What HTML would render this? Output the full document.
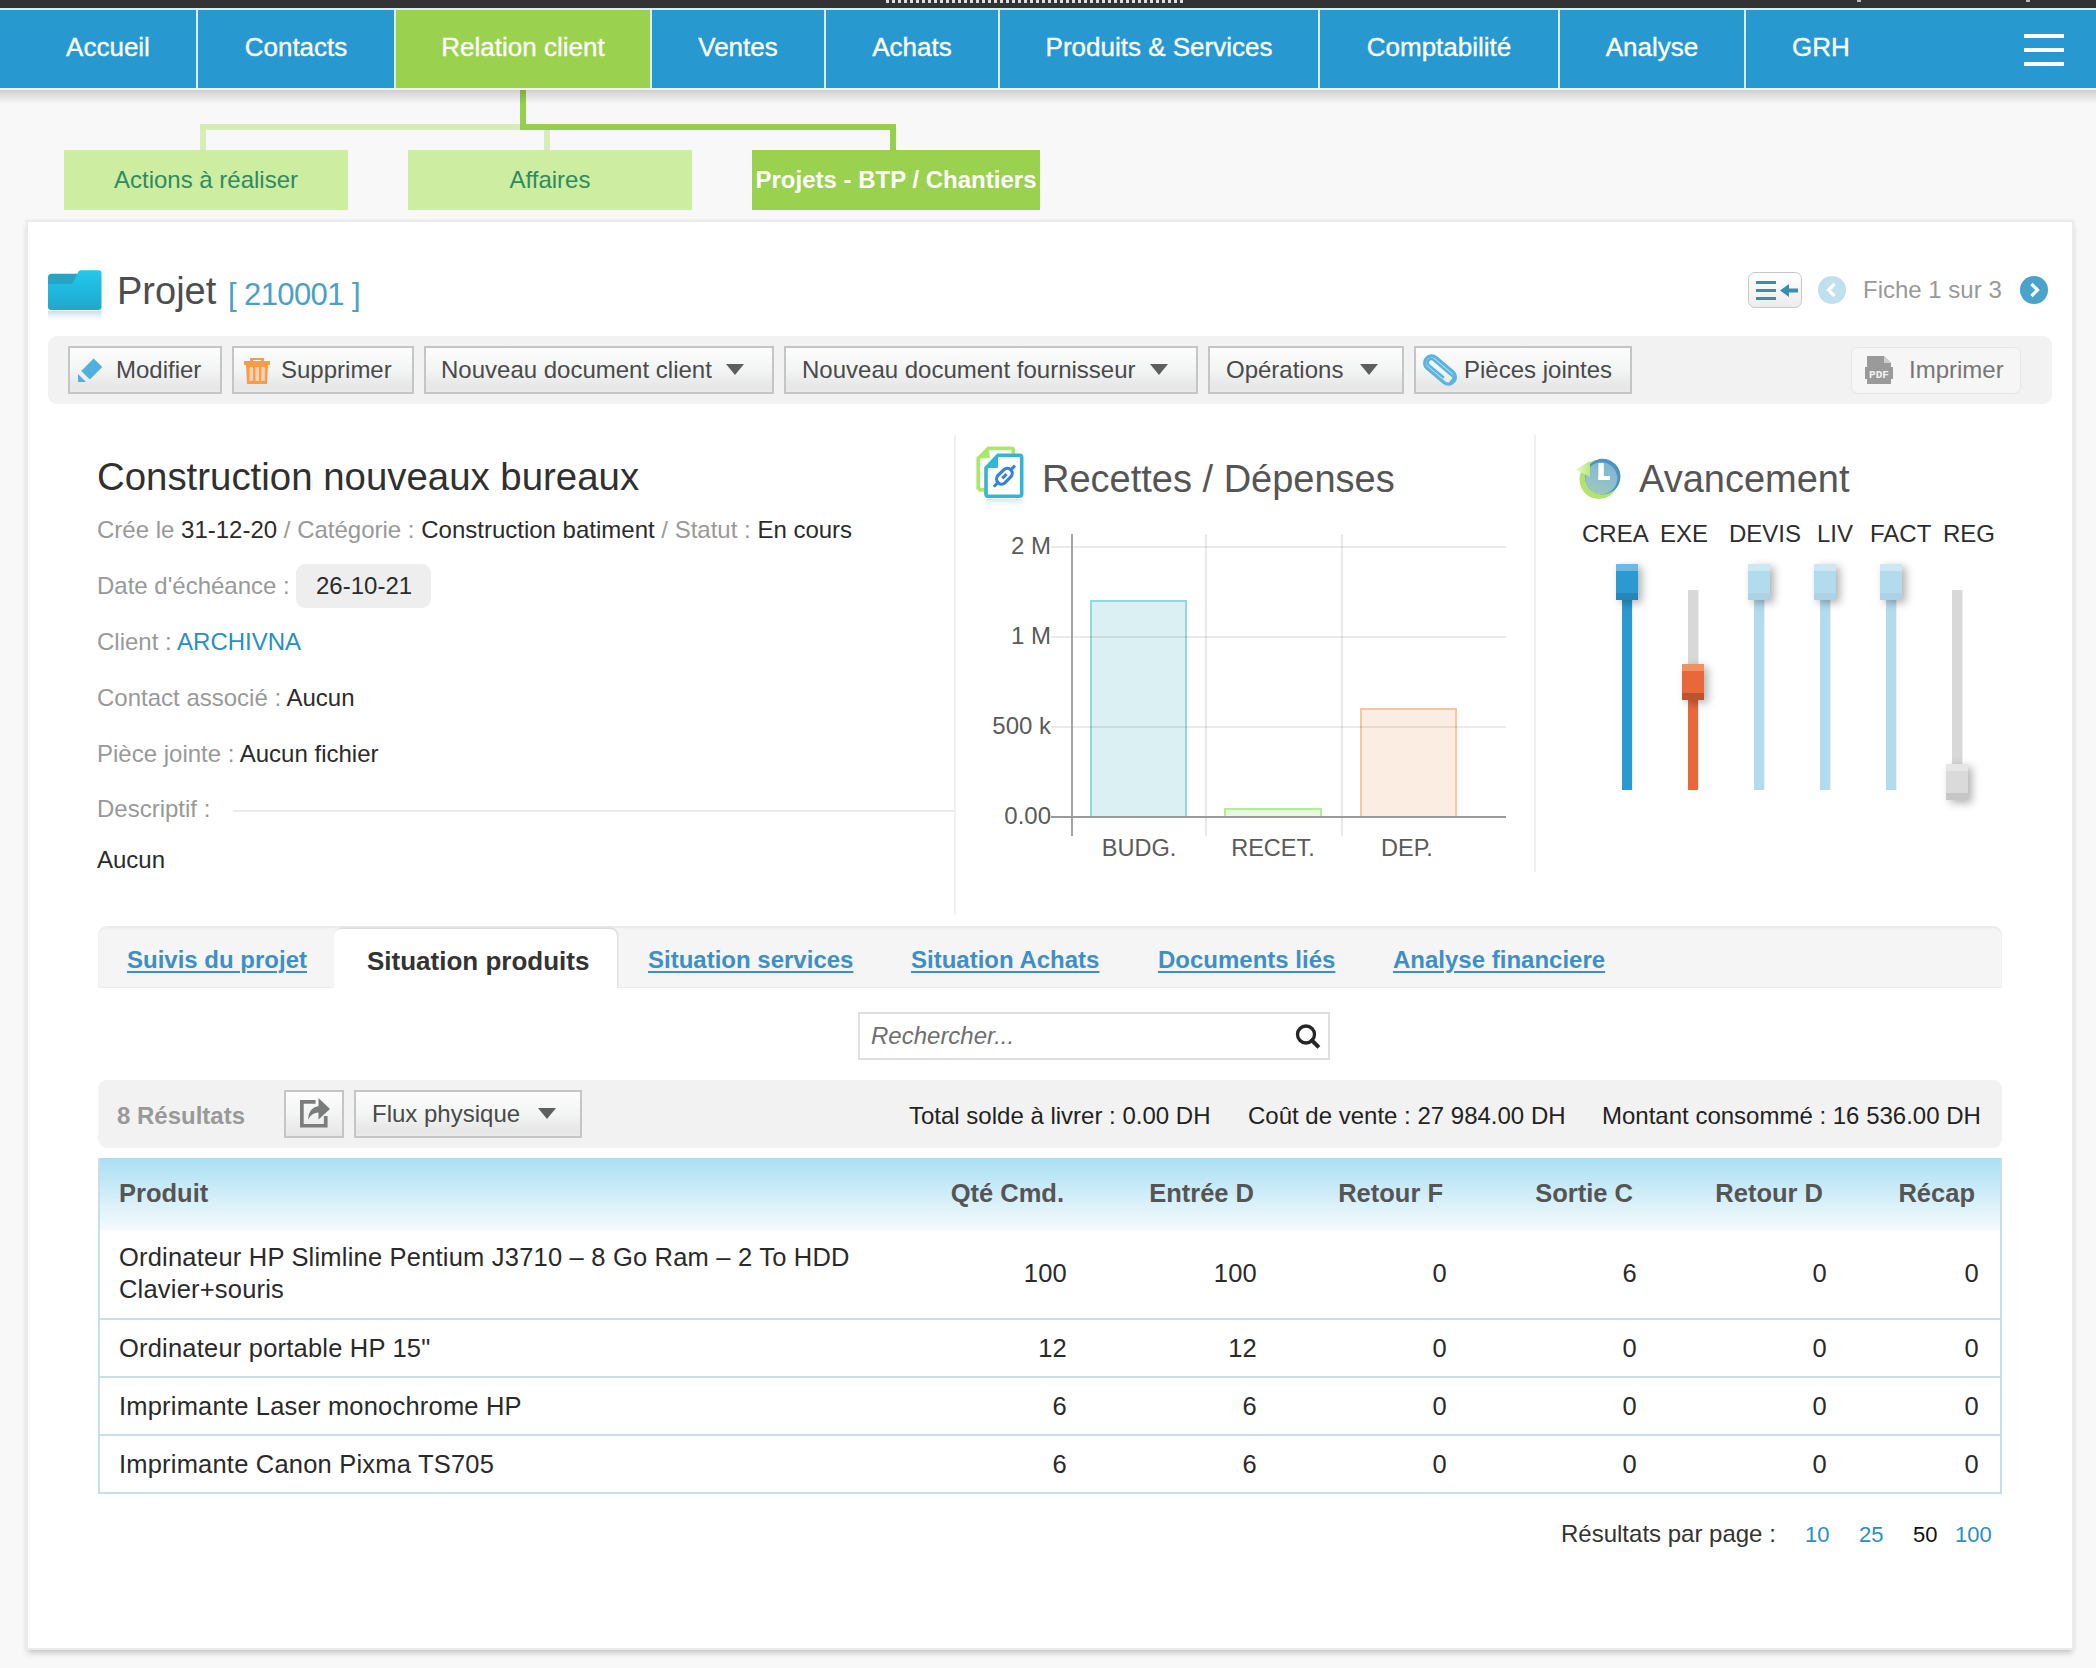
<!DOCTYPE html>
<html><head><meta charset="utf-8">
<style>
*{box-sizing:border-box;margin:0;padding:0}
html,body{width:2096px;height:1668px;overflow:hidden;background:#f8f8f8;font-family:"Liberation Sans",sans-serif;position:relative}
.a{position:absolute}
.topbar{left:0;top:0;width:2096px;height:8px;background:#333}
.dots{left:886px;top:0;width:300px;height:3px;background:repeating-linear-gradient(90deg,#ddd 0 3px,transparent 3px 6px)}
.nav{left:0;top:8px;width:2096px;height:82px;background:#2899d0;border-top:2px solid #d6eefa;border-bottom:2px solid #f2f2f2}
.nshadow{left:0;top:90px;width:2096px;height:14px;background:linear-gradient(rgba(0,0,0,.17),rgba(0,0,0,0))}
.ni{top:10px;height:78px;color:#fff;font-size:26px;line-height:75px;text-align:center;-webkit-text-stroke:.35px #fff}
.sep{top:10px;width:2px;height:78px;background:#d8ecf6}
.sub{top:150px;height:60px;background:#cdeea0;color:#2f8a63;font-size:24px;line-height:60px;text-align:center}
.card{left:26px;top:220px;width:2048px;height:1430px;background:#fff;border:2px solid #ebebeb;box-shadow:0 5px 6px -2px rgba(0,0,0,.2),-2px 0 4px rgba(0,0,0,.03),2px 0 4px rgba(0,0,0,.03)}

.t{position:absolute;white-space:nowrap;line-height:1}
.btn{position:absolute;top:346px;height:48px;border:2px solid #c4c6c6;background:linear-gradient(#fdfdfd 0%,#f3f4f4 50%,#e6e6e6 90%,#eaeaea 100%);color:#4a4a4a;font-size:24px}
.btn span{position:absolute;top:10px;line-height:1;white-space:nowrap}
.tri{position:absolute;top:16px;width:0;height:0;border-left:9px solid transparent;border-right:9px solid transparent;border-top:11px solid #5e5e5e}
.lbl{color:#999}
.val{color:#2b2b2b}

.trk{position:absolute;width:11px;border-right:1px solid #eee}
.hdl{position:absolute;width:22px;height:36px;box-shadow:4px 3px 9px rgba(0,0,0,.3)}
.hdl i{position:absolute;left:0;width:22px;height:7px}
.tab{position:absolute;top:948px;font-size:24px;font-weight:bold;color:#3f8fc6;text-decoration:underline;text-decoration-thickness:2px;text-underline-offset:3px;line-height:1;white-space:nowrap}
th,td{}

.tbl{position:absolute;left:98px;top:1158px;width:1904px;height:336px;border:2px solid #c8dee8;border-top:none;background:#fff}
.thd{position:absolute;left:100px;top:1158px;width:1900px;height:72px;background:linear-gradient(#aadff4,#e3f4fb 75%,#f2fafd);}
.hc{position:absolute;top:1181px;font-size:25.5px;font-weight:bold;color:#555;line-height:1;white-space:nowrap}
.rc{position:absolute;font-size:25.5px;letter-spacing:.2px;color:#2a2a2a;line-height:1;white-space:nowrap}
.rl{position:absolute;left:98px;width:1904px;height:2px;background:#c8dee8}
</style></head><body>
<div class="a topbar"></div>
<div class="a dots"></div>
<div class="a" style="left:1857px;top:0;width:4px;height:2px;background:#bbb"></div>
<div class="a" style="left:2026px;top:0;width:4px;height:2px;background:#bbb"></div>
<div class="a nav"></div>
<div class="a" style="left:520px;top:90px;width:6px;height:40px;background:#95cf4c"></div>
<div class="a nshadow"></div>
<div class="a ni" style="left:20px;width:176px">Accueil</div>
<div class="a sep" style="left:196px"></div>
<div class="a ni" style="left:198px;width:196px">Contacts</div>
<div class="a sep" style="left:394px"></div>
<div class="a ni" style="left:396px;width:254px;background:#9ad14e">Relation client</div>
<div class="a sep" style="left:650px"></div>
<div class="a ni" style="left:652px;width:172px">Ventes</div>
<div class="a sep" style="left:824px"></div>
<div class="a ni" style="left:826px;width:172px">Achats</div>
<div class="a sep" style="left:998px"></div>
<div class="a ni" style="left:1000px;width:318px">Produits &amp; Services</div>
<div class="a sep" style="left:1318px"></div>
<div class="a ni" style="left:1320px;width:238px">Comptabilité</div>
<div class="a sep" style="left:1558px"></div>
<div class="a ni" style="left:1560px;width:184px">Analyse</div>
<div class="a sep" style="left:1744px"></div>
<div class="a ni" style="left:1746px;width:150px">GRH</div>
<div class="a" style="left:2024px;top:34px;width:40px;height:4px;background:#fff"></div>
<div class="a" style="left:2024px;top:48px;width:40px;height:4px;background:#fff"></div>
<div class="a" style="left:2024px;top:62px;width:40px;height:4px;background:#fff"></div>

<!-- sub nav connectors -->
<div class="a" style="left:200px;top:124px;width:351px;height:6px;background:#d8ecb8"></div>
<div class="a" style="left:200px;top:124px;width:6px;height:26px;background:#d8ecb8"></div>
<div class="a" style="left:544px;top:124px;width:6px;height:26px;background:#d8ecb8"></div>
<div class="a" style="left:520px;top:124px;width:376px;height:6px;background:#95cf4c"></div>
<div class="a" style="left:890px;top:124px;width:6px;height:26px;background:#95cf4c"></div>
<div class="a sub" style="left:64px;width:284px">Actions à réaliser</div>
<div class="a sub" style="left:408px;width:284px">Affaires</div>
<div class="a sub" style="left:752px;width:288px;background:#9ad14e;color:#fff;font-weight:bold">Projets - BTP / Chantiers</div>

<div class="a card"></div>


<!-- project header -->
<svg class="a" style="left:46px;top:268px" width="60" height="58" viewBox="0 0 60 58">
 <defs><linearGradient id="fg" x1="0" y1="0" x2="0" y2="1"><stop offset="0" stop-color="#24c8ee"/><stop offset="1" stop-color="#1ea8cc"/></linearGradient>
 <linearGradient id="fr" x1="0" y1="0" x2="0" y2="1"><stop offset="0" stop-color="#c3dcf5"/><stop offset="1" stop-color="#fff" stop-opacity="0"/></linearGradient></defs>
 <path d="M2 9.5 Q2 5.8 5.8 5.8 L34 5.8 L34 20 L2 20 Z" fill="#27a3c4"/>
 <path d="M2 17 Q2 16 4 16 L24.5 16 Q26 16 27 14.5 L32.5 3.5 Q33.5 2.2 35 2.2 L52.5 2.2 Q55.5 2.2 55.5 5.2 L55.5 39 Q55.5 42 52.5 42 L5 42 Q2 42 2 39 Z" fill="url(#fg)"/>
 <rect x="2" y="43" width="53.5" height="12" fill="url(#fr)"/>
</svg>
<div class="t" style="left:117px;top:272px;font-size:38px;color:#4d4d4d">Projet</div>
<div class="t" style="left:228px;top:279px;font-size:31px;letter-spacing:-.6px;color:#4aa0c8">[ 210001 ]</div>

<div class="a" style="left:1748px;top:272px;width:54px;height:36px;border:1px solid #c8c8c8;border-radius:7px;background:linear-gradient(#fff,#ececec)"></div>
<svg class="a" style="left:1748px;top:272px" width="54" height="36" viewBox="0 0 54 36">
 <rect x="8" y="9" width="20" height="3" fill="#3a8db0"/><rect x="8" y="17" width="20" height="3" fill="#3a8db0"/><rect x="8" y="25" width="20" height="3" fill="#3a8db0"/>
 <path d="M32 18.5 L41 12 L41 16.5 L50 16.5 L50 20.5 L41 20.5 L41 25 Z" fill="#3a8db0"/>
</svg>
<svg class="a" style="left:1818px;top:276px" width="28" height="28" viewBox="0 0 28 28"><circle cx="14" cy="14" r="14" fill="#bfe0ee"/><path d="M16.5 8 L10.5 14 L16.5 20" stroke="#fff" stroke-width="3.2" fill="none"/></svg>
<div class="t" style="left:1863px;top:278px;font-size:24px;color:#999">Fiche 1 sur 3</div>
<svg class="a" style="left:2020px;top:276px" width="28" height="28" viewBox="0 0 28 28"><circle cx="14" cy="14" r="14" fill="#4aa3cc"/><path d="M11.5 8 L17.5 14 L11.5 20" stroke="#fff" stroke-width="3.2" fill="none"/></svg>

<!-- toolbar -->
<div class="a" style="left:48px;top:336px;width:2004px;height:68px;background:#f2f2f2;border-radius:9px"></div>
<div class="btn" style="left:68px;width:154px">
 <svg class="a" style="left:6px;top:8px" width="28" height="28" viewBox="0 0 28 28"><path d="M5.7 15 L17.6 3 L25.7 11 L13.8 23 Z" fill="#52b0dc" stroke="#52b0dc" stroke-width="1" stroke-linejoin="round"/><path d="M2 18 L10 26 L2 26 Z" fill="#52b0dc"/></svg>
 <span style="left:46px">Modifier</span></div>
<div class="btn" style="left:232px;width:182px">
 <svg class="a" style="left:8px;top:8px" width="30" height="30" viewBox="0 0 30 30"><path d="M8 2 H22 V5 H28 V9 H26 L25 28 H5 L4 9 H2 V5 H8 Z M11 4 V5 H19 V4 Z" fill="#f99b4d"/><rect x="7.5" y="11" width="3.6" height="14" fill="#f9d2b2"/><rect x="13.4" y="11" width="3.6" height="14" fill="#f9d2b2"/><rect x="19.3" y="11" width="3.6" height="14" fill="#f9d2b2"/></svg>
 <span style="left:47px">Supprimer</span></div>
<div class="btn" style="left:424px;width:350px"><span style="left:15px">Nouveau document client</span><div class="tri" style="left:300px"></div></div>
<div class="btn" style="left:784px;width:414px"><span style="left:16px">Nouveau document fournisseur</span><div class="tri" style="left:364px"></div></div>
<div class="btn" style="left:1208px;width:196px"><span style="left:16px">Opérations</span><div class="tri" style="left:150px"></div></div>
<div class="btn" style="left:1414px;width:218px">
 <svg class="a" style="left:6px;top:6px" width="36" height="32" viewBox="0 0 36 32"><g transform="translate(18,16) rotate(40)" fill="none" stroke="#5ab4de" stroke-width="3.2"><rect x="-18" y="-7" width="36" height="14" rx="7"/><path d="M16 3.5 V-1 Q16 -3.5 13 -3.5 H-12 Q-15 -3.5 -15 0 Q-15 3.5 -12 3.5 H8" stroke-width="2.6"/></g></svg>
 <span style="left:48px">Pièces jointes</span></div>
<div class="a" style="left:1851px;top:347px;width:170px;height:47px;border:1px solid #e6e6e6;border-radius:7px;background:#f6f6f6"></div>
<svg class="a" style="left:1865px;top:355px" width="28" height="30" viewBox="0 0 28 30"><path d="M2 1 H19 L26 8 V29 H2 Z" fill="#9a9a9a"/><path d="M19 1 V8 H26" fill="#cfcfcf"/><rect x="0" y="12" width="28" height="12" fill="#9a9a9a"/><text x="14" y="22.5" font-family="Liberation Mono" font-weight="bold" font-size="11" fill="#f2f2f2" text-anchor="middle">PDF</text></svg>
<div class="t" style="left:1909px;top:358px;font-size:24px;color:#777">Imprimer</div>

<!-- left info -->
<div class="t" style="left:97px;top:458px;font-size:38.4px;color:#303030">Construction nouveaux bureaux</div>
<div class="t" style="left:97px;top:518px;font-size:24px"><span class="lbl">Crée le </span><span class="val">31-12-20</span><span class="lbl"> / Catégorie : </span><span class="val">Construction batiment</span><span class="lbl"> / Statut : </span><span class="val">En cours</span></div>
<div class="t lbl" style="left:97px;top:574px;font-size:24px">Date d'échéance :</div>
<div class="a" style="left:296px;top:564px;width:135px;height:44px;background:#eeeeee;border-radius:9px"></div>
<div class="t val" style="left:316px;top:574px;font-size:24px">26-10-21</div>
<div class="t" style="left:97px;top:630px;font-size:24px"><span class="lbl">Client : </span><span style="color:#2a8fc1">ARCHIVNA</span></div>
<div class="t" style="left:97px;top:686px;font-size:24px"><span class="lbl">Contact associé : </span><span class="val">Aucun</span></div>
<div class="t" style="left:97px;top:742px;font-size:24px"><span class="lbl">Pièce jointe : </span><span class="val">Aucun fichier</span></div>
<div class="t lbl" style="left:97px;top:797px;font-size:24px">Descriptif :</div>
<div class="a" style="left:233px;top:810px;width:722px;height:2px;background:#ececec"></div>
<div class="t val" style="left:97px;top:848px;font-size:24px">Aucun</div>

<div class="a" style="left:954px;top:435px;width:2px;height:480px;background:#f0f0f0"></div>
<div class="a" style="left:1534px;top:435px;width:2px;height:437px;background:#f0f0f0"></div>

<!-- chart -->
<svg class="a" style="left:972px;top:442px" width="58" height="72" viewBox="0 0 58 72">
 <defs><linearGradient id="cr" x1="0" y1="0" x2="0" y2="1"><stop offset="0" stop-color="#d3e9f3"/><stop offset="1" stop-color="#fff" stop-opacity="0"/></linearGradient></defs>
 <path d="M6.3 47.8 L6.3 16.5 L16.5 6.3 L39.5 6.3 Q41.3 6.3 41.3 8.5 L41.3 14" stroke="#a9e86a" stroke-width="3.8" fill="none"/>
 <path d="M6.3 16.5 L16.5 6.3 L18 16 Z" fill="#a9e86a"/>
 <path d="M6.3 47.8 L16 47.8" stroke="#a9e86a" stroke-width="3.8"/>
 <path d="M14 52 L14 26 L26 13.3 L47.5 13.3 Q49.7 13.3 49.7 15.5 L49.7 52 Q49.7 54.3 47.5 54.3 L16 54.3 Q14 54.3 14 52 Z" stroke="#35b5d6" stroke-width="3.6" fill="#fff"/>
 <path d="M14 26 L26 13.3 L26 25 Q26 26 25 26 Z" fill="#35b5d6"/>
 <g transform="translate(32.4,34.2) rotate(-45)" stroke="#3a80d6" fill="none"><rect x="-9" y="-5" width="18" height="10" rx="5" stroke-width="3.2"/><path d="M-15 0 H-9 M9 0 H15 M-3 0 H3" stroke-width="3"/></g>
 <rect x="14" y="57" width="36" height="10" fill="url(#cr)"/>
</svg>
<div class="t" style="left:1042px;top:460px;font-size:38px;color:#555">Recettes / Dépenses</div>
<svg class="a" style="left:950px;top:520px" width="580" height="360" viewBox="950 520 580 360">
 <rect x="1091" y="601" width="95" height="216" fill="#dbf0f2" stroke="#93d8dc" stroke-width="2"/>
 <rect x="1225" y="809" width="96" height="8" fill="#e8fadf" stroke="#b4ec98" stroke-width="2"/>
 <rect x="1361" y="709" width="95" height="108" fill="#fcede2" stroke="#f4c7a2" stroke-width="2"/>
 <g stroke="rgba(0,0,0,.11)" stroke-width="1.6">
  <line x1="1051" y1="547" x2="1506" y2="547"/>
  <line x1="1051" y1="637" x2="1506" y2="637"/>
  <line x1="1051" y1="727" x2="1506" y2="727"/>
  <line x1="1206" y1="534" x2="1206" y2="836"/>
  <line x1="1342" y1="534" x2="1342" y2="836"/>
 </g>
 <line x1="1072" y1="534" x2="1072" y2="836" stroke="#9a9a9a" stroke-width="1.8"/>
 <line x1="1051" y1="817" x2="1506" y2="817" stroke="#9a9a9a" stroke-width="1.8"/>
 <g font-family="Liberation Sans" font-size="24" fill="#5a5a5a" text-anchor="end">
  <text x="1051" y="554">2 M</text><text x="1051" y="644">1 M</text><text x="1051" y="734">500 k</text><text x="1051" y="824">0.00</text>
 </g>
 <g font-family="Liberation Sans" font-size="23.5" fill="#5a5a5a" text-anchor="middle">
  <text x="1139" y="856">BUDG.</text><text x="1273" y="856">RECET.</text><text x="1407" y="856">DEP.</text>
 </g>
</svg>

<!-- avancement -->
<svg class="a" style="left:1572px;top:454px" width="54" height="50" viewBox="0 0 54 50">
 <defs><linearGradient id="cg" x1=".8" y1="0" x2=".3" y2="1"><stop offset="0" stop-color="#7db4d6"/><stop offset="1" stop-color="#9cc9c0"/></linearGradient>
 <linearGradient id="ag" x1="0" y1="0" x2="1" y2="0"><stop offset="0" stop-color="#eaf8d8"/><stop offset="1" stop-color="#b8e878"/></linearGradient></defs>
 <circle cx="27" cy="25.5" r="19.5" fill="#b3e36e"/>
 <circle cx="30.7" cy="22.6" r="17.8" fill="#4a95c6"/>
 <circle cx="29.3" cy="24.2" r="16" fill="url(#cg)"/>
 <path d="M3.7 15.6 L18 7 L18 23 Z" fill="url(#ag)"/>
 <rect x="26.4" y="9" width="5.4" height="17" fill="#fff"/><rect x="26.4" y="22" width="11.6" height="4" fill="#fff"/>
</svg>
<div class="t" style="left:1639px;top:460px;font-size:38px;color:#555">Avancement</div>
<div class="t" style="left:1582px;top:522px;font-size:24px;color:#2d2d2d">CREA</div>
<div class="t" style="left:1660px;top:522px;font-size:24px;color:#2d2d2d">EXE</div>
<div class="t" style="left:1729px;top:522px;font-size:24px;color:#2d2d2d">DEVIS</div>
<div class="t" style="left:1817px;top:522px;font-size:24px;color:#2d2d2d">LIV</div>
<div class="t" style="left:1870px;top:522px;font-size:24px;color:#2d2d2d">FACT</div>
<div class="t" style="left:1943px;top:522px;font-size:24px;color:#2d2d2d">REG</div>

<!-- sliders -->
<div class="trk" style="left:1622px;top:600px;height:190px;background:#2a9ad1"></div><div class="hdl" style="left:1616px;top:564px;background:#2a9ad1"><i style="top:0;background:#6db9e1"></i><i style="bottom:0;background:#2985b8"></i></div>
<div class="trk" style="left:1688px;top:590px;height:74px;background:#d8d8d8"></div><div class="trk" style="left:1688px;top:700px;height:90px;background:#e8683a"></div><div class="hdl" style="left:1682px;top:664px;background:#e8683a"><i style="top:0;background:#ef9163"></i><i style="bottom:0;background:#ba552f"></i></div>
<div class="trk" style="left:1754px;top:600px;height:190px;background:#b3dbee"></div><div class="hdl" style="left:1748px;top:564px;background:#b3dbee"><i style="top:0;background:#cfe7f3"></i><i style="bottom:0;background:#aed2e4"></i></div>
<div class="trk" style="left:1820px;top:600px;height:190px;background:#b3dbee"></div><div class="hdl" style="left:1814px;top:564px;background:#b3dbee"><i style="top:0;background:#cfe7f3"></i><i style="bottom:0;background:#aed2e4"></i></div>
<div class="trk" style="left:1886px;top:600px;height:190px;background:#b3dbee"></div><div class="hdl" style="left:1880px;top:564px;background:#b3dbee"><i style="top:0;background:#cfe7f3"></i><i style="bottom:0;background:#aed2e4"></i></div>
<div class="trk" style="left:1952px;top:590px;height:174px;background:#d8d8d8"></div><div class="hdl" style="left:1946px;top:764px;background:#dadada"><i style="top:0;background:#e6e6e6"></i><i style="bottom:0;background:#c6c6c6"></i></div>

<!-- tabs -->
<div class="a" style="left:98px;top:926px;width:1904px;height:62px;background:#f5f5f5;border-radius:9px 9px 0 0;box-shadow:inset 0 2px 2px rgba(0,0,0,.05);border-bottom:1px solid #ececec"></div>
<div class="a" style="left:334px;top:929px;width:283px;height:59px;background:#fff;border-radius:7px 7px 0 0;box-shadow:1px -1px 2px rgba(0,0,0,.12)"></div>
<div class="tab" style="left:127px">Suivis du projet</div>
<div class="t" style="left:367px;top:948px;font-size:26px;font-weight:bold;color:#333">Situation produits</div>
<div class="tab" style="left:648px">Situation services</div>
<div class="tab" style="left:911px">Situation Achats</div>
<div class="tab" style="left:1158px">Documents liés</div>
<div class="tab" style="left:1393px">Analyse financiere</div>

<!-- search -->
<div class="a" style="left:858px;top:1012px;width:472px;height:48px;border:2px solid #e0e0e0;background:#fff"></div>
<div class="t" style="left:871px;top:1024px;font-size:24px;font-style:italic;color:#6f6f6f">Rechercher...</div>
<svg class="a" style="left:1293px;top:1022px" width="30" height="28" viewBox="0 0 30 28"><circle cx="13" cy="12.5" r="8.5" stroke="#262626" stroke-width="3.3" fill="none"/><path d="M19 18.5 L24.5 24" stroke="#262626" stroke-width="4" stroke-linecap="square"/></svg>

<!-- results bar -->
<div class="a" style="left:98px;top:1080px;width:1904px;height:68px;background:#f2f2f2;border-radius:9px"></div>
<div class="t" style="left:117px;top:1104px;font-size:24px;font-weight:bold;color:#999">8 Résultats</div>
<div class="a" style="left:284px;top:1090px;width:60px;height:48px;border:2px solid #c4c6c6;background:linear-gradient(#fdfdfd,#f3f4f4 50%,#e6e6e6)"></div>
<svg class="a" style="left:296px;top:1096px" width="36" height="34" viewBox="0 0 36 34"><path d="M4 4 H19.6 V7.7 H7.7 V27.9 H27.9 V20 H31.6 V31.6 H4 Z" fill="#7d7d7d"/><path d="M12 23.5 Q12.5 11.5 22.5 10 V2 L34 13 L22.5 23.5 V16.5 Q16 16.5 12 23.5 Z" fill="#7b7b7b"/></svg>
<div class="btn" style="left:354px;top:1090px;width:228px"><span style="left:16px;top:10px">Flux physique</span><div class="tri" style="left:182px"></div></div>
<div class="t" style="left:909px;top:1104px;font-size:24px;color:#222">Total solde à livrer : 0.00 DH</div>
<div class="t" style="left:1248px;top:1104px;font-size:24px;color:#222">Coût de vente : 27 984.00 DH</div>
<div class="t" style="left:1602px;top:1104px;font-size:24px;color:#222">Montant consommé : 16 536.00 DH</div>

<!-- table -->
<div class="tbl"></div>
<div class="thd"></div>
<div class="hc" style="left:119px">Produit</div>
<div class="hc" style="right:1032px">Qté Cmd.</div>
<div class="hc" style="right:842px">Entrée D</div>
<div class="hc" style="right:653px">Retour F</div>
<div class="hc" style="right:463px">Sortie C</div>
<div class="hc" style="right:273px">Retour D</div>
<div class="hc" style="right:121px">Récap</div>
<div class="rl" style="top:1318px"></div><div class="rl" style="top:1376px"></div><div class="rl" style="top:1434px"></div>
<div class="rc" style="left:119px;top:1245px">Ordinateur HP Slimline Pentium J3710 – 8 Go Ram – 2 To HDD</div>
<div class="rc" style="left:119px;top:1277px">Clavier+souris</div>
<div class="rc" style="left:119px;top:1336px">Ordinateur portable HP 15"</div>
<div class="rc" style="left:119px;top:1394px">Imprimante Laser monochrome HP</div>
<div class="rc" style="left:119px;top:1452px">Imprimante Canon Pixma TS705</div>
<div class="rc" style="right:1029px;top:1261px">100</div>
<div class="rc" style="right:839px;top:1261px">100</div>
<div class="rc" style="right:649px;top:1261px">0</div>
<div class="rc" style="right:459px;top:1261px">6</div>
<div class="rc" style="right:269px;top:1261px">0</div>
<div class="rc" style="right:117px;top:1261px">0</div>
<div class="rc" style="right:1029px;top:1336px">12</div>
<div class="rc" style="right:839px;top:1336px">12</div>
<div class="rc" style="right:649px;top:1336px">0</div>
<div class="rc" style="right:459px;top:1336px">0</div>
<div class="rc" style="right:269px;top:1336px">0</div>
<div class="rc" style="right:117px;top:1336px">0</div>
<div class="rc" style="right:1029px;top:1394px">6</div>
<div class="rc" style="right:839px;top:1394px">6</div>
<div class="rc" style="right:649px;top:1394px">0</div>
<div class="rc" style="right:459px;top:1394px">0</div>
<div class="rc" style="right:269px;top:1394px">0</div>
<div class="rc" style="right:117px;top:1394px">0</div>
<div class="rc" style="right:1029px;top:1452px">6</div>
<div class="rc" style="right:839px;top:1452px">6</div>
<div class="rc" style="right:649px;top:1452px">0</div>
<div class="rc" style="right:459px;top:1452px">0</div>
<div class="rc" style="right:269px;top:1452px">0</div>
<div class="rc" style="right:117px;top:1452px">0</div>

<!-- pagination -->
<div class="t" style="left:1561px;top:1522px;font-size:24px;color:#333">Résultats par page :</div>
<div class="t" style="left:1805px;top:1524px;font-size:22px;color:#2a8fc1">10</div>
<div class="t" style="left:1859px;top:1524px;font-size:22px;color:#2a8fc1">25</div>
<div class="t" style="left:1913px;top:1524px;font-size:22px;color:#111">50</div>
<div class="t" style="left:1955px;top:1524px;font-size:22px;color:#2a8fc1">100</div>
</body></html>
